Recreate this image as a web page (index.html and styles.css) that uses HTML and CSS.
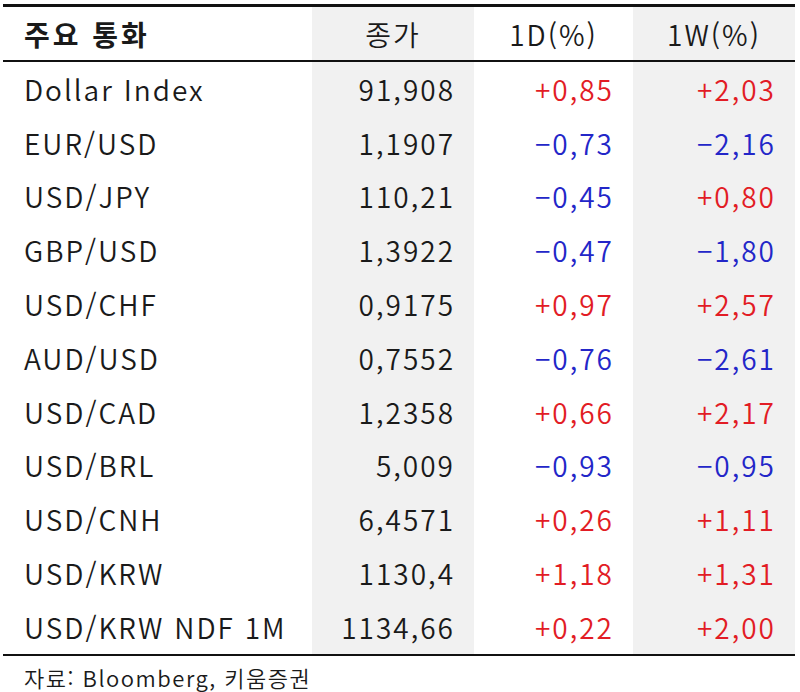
FILE: index.html
```html
<!DOCTYPE html>
<html lang="ko">
<head>
<meta charset="utf-8">
<link rel="stylesheet" href="styles.css">
</head>
<body>
<div class="wrap">
  <div class="table">
    <div class="row head">
      <div class="c c1 title">주요 통화</div>
      <div class="c c2 center">종가</div>
      <div class="c c3 center">1D(%)</div>
      <div class="c c4 center">1W(%)</div>
    </div>
    <div class="body">
      <div class="row"><div class="c c1">Dollar Index</div><div class="c c2">91,908</div><div class="c c3 up">+0,85</div><div class="c c4 up">+2,03</div></div>
      <div class="row"><div class="c c1">EUR/USD</div><div class="c c2">1,1907</div><div class="c c3 dn">−0,73</div><div class="c c4 dn">−2,16</div></div>
      <div class="row"><div class="c c1">USD/JPY</div><div class="c c2">110,21</div><div class="c c3 dn">−0,45</div><div class="c c4 up">+0,80</div></div>
      <div class="row"><div class="c c1">GBP/USD</div><div class="c c2">1,3922</div><div class="c c3 dn">−0,47</div><div class="c c4 dn">−1,80</div></div>
      <div class="row"><div class="c c1">USD/CHF</div><div class="c c2">0,9175</div><div class="c c3 up">+0,97</div><div class="c c4 up">+2,57</div></div>
      <div class="row"><div class="c c1">AUD/USD</div><div class="c c2">0,7552</div><div class="c c3 dn">−0,76</div><div class="c c4 dn">−2,61</div></div>
      <div class="row"><div class="c c1">USD/CAD</div><div class="c c2">1,2358</div><div class="c c3 up">+0,66</div><div class="c c4 up">+2,17</div></div>
      <div class="row"><div class="c c1">USD/BRL</div><div class="c c2">5,009</div><div class="c c3 dn">−0,93</div><div class="c c4 dn">−0,95</div></div>
      <div class="row"><div class="c c1">USD/CNH</div><div class="c c2">6,4571</div><div class="c c3 up">+0,26</div><div class="c c4 up">+1,11</div></div>
      <div class="row"><div class="c c1">USD/KRW</div><div class="c c2">1130,4</div><div class="c c3 up">+1,18</div><div class="c c4 up">+1,31</div></div>
      <div class="row"><div class="c c1">USD/KRW NDF 1M</div><div class="c c2">1134,66</div><div class="c c3 up">+0,22</div><div class="c c4 up">+2,00</div></div>
    </div>
  </div>
  <div class="source">자료: Bloomberg, 키움증권</div>
</div>
</body>
</html>
```
FILE: styles.css
```css
html, body {
  margin: 0;
  padding: 0;
  background: #ffffff;
}
body {
  font-family: "Noto Sans CJK KR", "Noto Sans", sans-serif;
  color: #1a1a1a;
}
.wrap {
  padding: 4px 5px 0 3px;
}
.table {
  border-top: 3px solid #111;
  border-bottom: 2px solid #111;
}
.row {
  display: grid;
  grid-template-columns: 309px 162px 159px 162px;
  height: 53.8px;
}
.head {
  height: 53px;
  border-bottom: 2px solid #111;
}
.c {
  display: flex;
  align-items: center;
  justify-content: flex-end;
  font-size: 28px;
  font-weight: 350;
  padding-right: 19px;
  letter-spacing: 2px;
}
.c1 {
  justify-content: flex-start;
  padding-left: 21px;
  padding-right: 0;
}
.c2, .c4 {
  background: #f1f1f1;
}
.center {
  justify-content: center;
  padding-right: 0;
}
.title {
  font-weight: 700;
  letter-spacing: 3px;
}
.up { color: #e21c25; }
.dn { color: #2326c8; }
.source {
  padding: 5px 0 0 21px;
  font-size: 22px;
  font-weight: 350;
  letter-spacing: 1.5px;
}
```
